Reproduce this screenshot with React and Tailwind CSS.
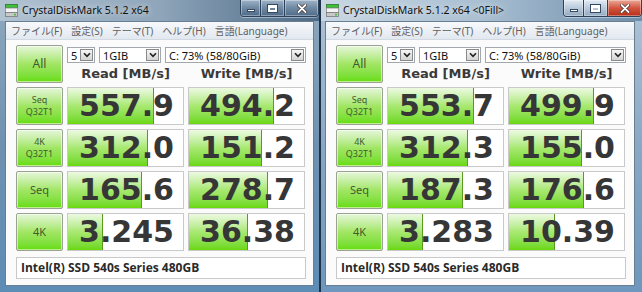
import React from "react";

const LEFT = {
  title: "CrystalDiskMark 5.1.2 x64",
  active: false,
  rows: [
    [557.9, "557.9", 494.2, "494.2"],
    [312.0, "312.0", 151.2, "151.2"],
    [165.6, "165.6", 278.7, "278.7"],
    [3.245, "3.245", 36.38, "36.38"],
  ],
};
const RIGHT = {
  title: "CrystalDiskMark 5.1.2 x64 <0Fill>",
  active: true,
  rows: [
    [553.7, "553.7", 499.9, "499.9"],
    [312.3, "312.3", 155.0, "155.0"],
    [187.3, "187.3", 176.6, "176.6"],
    [3.283, "3.283", 10.39, "10.39"],
  ],
};

function AppIcon() {
  return (
    <svg width="13" height="13" viewBox="0 0 13 13">
      <rect x="0.5" y="0.5" width="12" height="3.5" fill="#3fbf3a" stroke="#2a7a2a" strokeWidth="0.8" />
      <rect x="0.5" y="4" width="12" height="4.5" fill="#f4f4f4" stroke="#8a8a8a" strokeWidth="0.8" />
      <rect x="0.5" y="8.5" width="12" height="4" fill="#c9c9c9" stroke="#7a7a7a" strokeWidth="0.8" />
      <rect x="9" y="9.8" width="2" height="1.6" fill="#3fbf3a" />
    </svg>
  );
}

function CaptionButtons({ active }) {
  const glass = active
    ? "bg-gradient-to-b from-[#e3ebf3] via-[#b9cadb] to-[#93aac1]"
    : "bg-gradient-to-b from-[#9fb3c6] via-[#6f89a3] to-[#4f6b88]";
  const close = active
    ? "bg-gradient-to-b from-[#eaa89a] via-[#d2553f] to-[#b52d18]"
    : "bg-gradient-to-b from-[#9fb3c6] via-[#6f89a3] to-[#4f6b88]";
  return (
    <div className="flex h-[17px] border border-t-0 border-[#2d435c] rounded-b-[4px] overflow-hidden shadow-[0_1px_0_rgba(255,255,255,0.4)]">
      <div className={"w-[20px] flex items-end justify-center pb-[4px] border-r border-[#2d435c] shadow-[inset_0_0_0_1px_rgba(255,255,255,0.35)] " + glass}>
        <div className="w-[8px] h-[3px] bg-white border border-[#34495f]" />
      </div>
      <div className={"w-[24px] flex items-center justify-center border-r border-[#2d435c] shadow-[inset_0_0_0_1px_rgba(255,255,255,0.35)] " + glass}>
        <div className="w-[9px] h-[7px] border-[2px] border-white border-t-[3px] outline outline-1 outline-[#34495f]" />
      </div>
      <div className={"w-[33px] flex items-center justify-center shadow-[inset_0_0_0_1px_rgba(255,255,255,0.35)] " + close}>
        <svg width="10" height="9" viewBox="0 0 10 9">
          <path d="M1.5 1 L8.5 8 M8.5 1 L1.5 8" stroke="#3b2a2a" strokeWidth="3.2" strokeLinecap="round" />
          <path d="M1.5 1 L8.5 8 M8.5 1 L1.5 8" stroke="#ffffff" strokeWidth="1.8" strokeLinecap="round" />
        </svg>
      </div>
    </div>
  );
}

function Arrow() {
  return (
    <div className="ml-auto mr-[1px] w-[13px] h-[12px] border border-[#8a8a8a] bg-gradient-to-b from-[#f6f6f6] to-[#d4d4d4] flex items-center justify-center">
      <svg width="8" height="6" viewBox="0 0 8 6">
        <path d="M1 1.2 L4 4.4 L7 1.2" fill="none" stroke="#222" strokeWidth="1.6" />
      </svg>
    </div>
  );
}

function Combo({ className, text }) {
  return (
    <div className={"h-[16px] border border-[#a3a8ae] bg-white flex items-center pl-[3px] text-[11px] text-[#111] font-['Noto_Sans',sans-serif] leading-none " + className}>
      <span>{text}</span>
      <Arrow />
    </div>
  );
}

function LabelBtn({ children }) {
  return (
    <div className="w-[47px] h-[38px] border border-[#9aa393] rounded-[2px] bg-gradient-to-b from-[#e6f6d8] via-[#a2e664] to-[#66dc00] shadow-[inset_0_0_0_1px_rgba(255,255,255,0.55)] flex flex-col items-center justify-center text-[#3f5c2d] font-['Noto_Sans',sans-serif] leading-[12px]">
      {children}
    </div>
  );
}

function Cell({ v, text }) {
  const w = Math.round((Math.log10(v * 10) / 5) * 115);
  return (
    <div className="relative h-[38px] border border-[#c9c9c9] bg-white">
      <div
        className="absolute left-0 top-0 bottom-0 bg-gradient-to-b from-[#edf9e2] via-[#a8e870] to-[#6ad806] border-r border-[#5a9a22]"
        style={{ width: w }}
      />
      <div className="relative h-full flex items-center justify-end pr-[9px] font-['DejaVu_Sans',sans-serif] font-bold text-[30px] text-[#363636] leading-none">
        {text}
      </div>
    </div>
  );
}

const LABELS = [
  <>
    <span className="text-[9px]">Seq</span>
    <span className="text-[9px]">Q32T1</span>
  </>,
  <>
    <span className="text-[9px]">4K</span>
    <span className="text-[9px]">Q32T1</span>
  </>,
  <span className="text-[11px]">Seq</span>,
  <span className="text-[11px]">4K</span>,
];

function Window({ data, className, frame, titleBg }) {
  return (
    <div className={"h-[292px] flex flex-col " + className + " " + frame}>
      <div className={"h-[21px] flex items-start shrink-0 " + titleBg}>
        <div className="pt-[4px] pl-[5px]">
          <AppIcon />
        </div>
        <div className="pl-[4px] pt-[3px] text-[10.5px] leading-[14px] text-[#111] font-['Noto_Sans',sans-serif] whitespace-nowrap [text-shadow:0_0_6px_rgba(255,255,255,0.9)]">
          {data.title}
        </div>
        <div className="ml-auto">
          <CaptionButtons active={data.active} />
        </div>
      </div>
      <div className="flex-1 flex flex-col border border-[#6a7e92] bg-[#fbfbfb]">
        <div className="h-[18px] shrink-0 flex items-center gap-[9px] pl-[5px] bg-gradient-to-b from-[#f7f9fc] to-[#e2e8f0] border-b border-[#d3d9e1] text-[10px] text-[#606060] font-['Noto_Sans','Noto_Sans_CJK_JP',sans-serif] whitespace-nowrap leading-none">
          <span>ファイル(F)</span>
          <span>設定(S)</span>
          <span>テーマ(T)</span>
          <span>ヘルプ(H)</span>
          <span>言語(Language)</span>
        </div>
        <div className="flex-1 flex flex-col pl-[10px] pt-[5px]">
          <div className="flex gap-[4px] h-[38px]">
            <LabelBtn>
              <span className="text-[12px]">All</span>
            </LabelBtn>
            <div className="flex flex-col">
              <div className="flex gap-[4px] mt-[2px]">
                <Combo className="w-[28px]" text="5" />
                <Combo className="w-[62px]" text="1GIB" />
                <Combo className="w-[141px]" text="C: 73% (58/80GiB)" />
              </div>
              <div className="grid grid-cols-[117px_117px] gap-[4px] mt-[1px] h-[20px] items-center text-center font-['DejaVu_Sans',sans-serif] font-bold text-[13px] text-[#3a3a3a] leading-none">
                <span>Read [MB/s]</span>
                <span>Write [MB/s]</span>
              </div>
            </div>
          </div>
          <div className="mt-[4px] grid grid-cols-[47px_117px_117px] gap-[4px]">
            {data.rows.map((r, i) => (
              <React.Fragment key={i}>
                <LabelBtn>{LABELS[i]}</LabelBtn>
                <Cell v={r[0]} text={r[1]} />
                <Cell v={r[2]} text={r[3]} />
              </React.Fragment>
            ))}
          </div>
          <div className="mt-[6px] w-[290px] h-[22px] border border-[#c9c9c9] bg-white flex items-center pl-[4px] font-['Open_Sans',sans-serif] font-bold text-[12px] text-[#2a2a2a] leading-none">
            Intel(R) SSD 540s Series 480GB
          </div>
        </div>
      </div>
      <div className="h-[6px] shrink-0" />
    </div>
  );
}

export default function App() {
  return (
    <div className="w-[642px] h-[292px] flex bg-[#2a4562] overflow-hidden">
      <Window
        data={LEFT}
        className="w-[320px] pl-[5px] pr-[5px] border-r border-[#1e324a]"
        frame="bg-gradient-to-b from-[#8ea8be] via-[#6f91b0] to-[#5d8cb5]"
        titleBg="bg-gradient-to-r from-[#b2c3d2] via-[#8ea5ba] to-[#4d6a86] -mx-[5px]"
      />
      <Window
        data={RIGHT}
        className="w-[322px] pl-[4px] pr-[7px] border-l border-[#1e324a]"
        frame="bg-gradient-to-b from-[#b0c4d6] via-[#89a8c4] to-[#6d97bd]"
        titleBg="bg-gradient-to-r from-[#c9d7e3] via-[#a9bfd2] to-[#6f8eab] -ml-[4px] -mr-[7px]"
      />
    </div>
  );
}
